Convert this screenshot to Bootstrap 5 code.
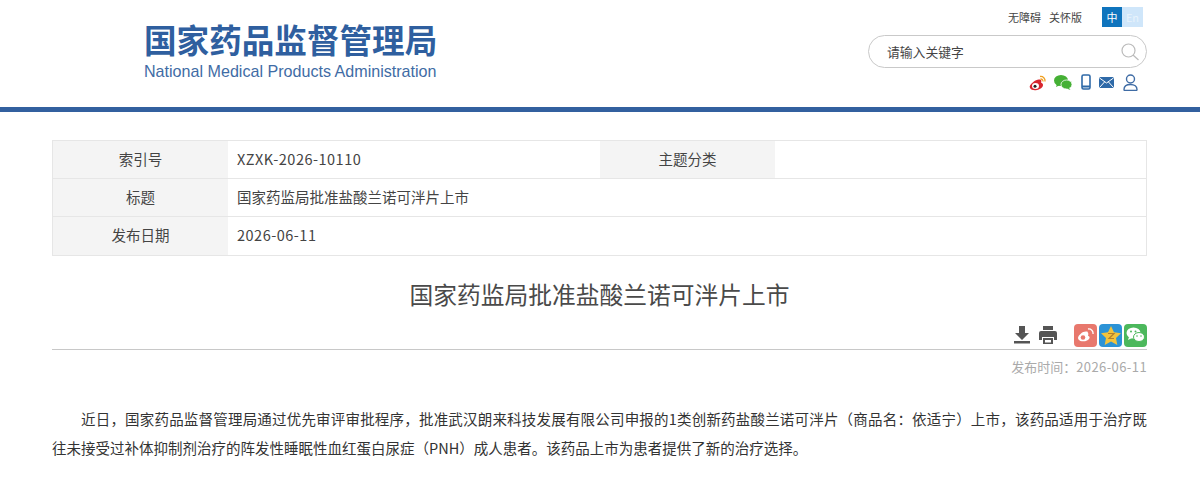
<!DOCTYPE html>
<html lang="zh"><head><meta charset="utf-8">
<link href="https://cdn.jsdelivr.net/npm/bootstrap@5.3.0/dist/css/bootstrap.min.css" rel="stylesheet">
<style>
html,body{height:484px;overflow:hidden}
body{font-family:"Noto Sans CJK SC","Noto Sans",sans-serif;color:#333;background:#fff;font-size:14px}
.hdr{height:112px;border-bottom:5px solid #32609f;padding:0 53px 0 144px}
.logo{padding-top:18px;color:#2f5f9f}
.logo-cn{font-size:32.6px;font-weight:700;line-height:42px;white-space:nowrap;width:293px}
.logo-en{font-family:"Liberation Sans",sans-serif;font-size:16.1px;font-weight:400;line-height:18px;margin-top:2px;white-space:nowrap;color:#3f6ca5}
.hright{width:279px;padding-top:7px}
.tools{font-size:11px;line-height:20px;color:#444;padding-right:4px}
.lang{display:flex;width:41px;height:20px;margin-left:20px;line-height:20px;text-align:center;font-size:11px}
.lang-a{width:20px;background:#0f74bd;color:#fff}
.lang-b{flex:1;background:#cfe6fa;color:#e8f3fc}
.srch{height:33px;margin-top:8px;border:1px solid #c9c9c9;border-radius:17px;padding:0 6px 0 18px;font-size:12.8px;color:#444}
.srch-ph{line-height:29px}
.socials{margin-top:4px;height:20px}
.ic-we{margin-left:7px}.ic-ph{margin-left:9px}.ic-ma{margin-left:8px}.ic-us{margin-left:9px;margin-right:9px}
.main-wrap{padding:0 53px 0 52px}
.meta{margin:28px 0 0;border:1px solid #e6e6e6;font-size:14.5px;color:#444}
.meta-row{height:38.2px;border-bottom:1px solid #e6e6e6;line-height:36px}
.meta-row:last-child{border-bottom:0;height:37.500px}
.mh{width:175px;background:#f4f4f4;text-align:center;flex:none}
.mv{flex:1;padding-left:9px}
.mv2{width:372px;flex:none;padding-left:9px}
.ltn{letter-spacing:.5px}
.art-title{font-size:23.750px;line-height:30px;color:#4a4a4a;text-align:center;margin:23px 0 0}
.tools2{height:27px;margin-top:13px}
.ic-pr{margin-left:9px}
.share{width:23px;height:23px;border-radius:4px;margin-left:2px;display:flex;align-items:center;justify-content:center}
.share-first{margin-left:17px}
.sh-w{background:#e8786d}.sh-q{background:#2c93d6}.sh-c{background:#4cb85c}
.rule{height:1px;background:#c8c8c8;margin-top:0}
.pubtime{font-size:13px;color:#aaa;text-align:right;line-height:20px;margin-top:7px}
.pubtime .ltn{letter-spacing:.4px}
.body-text{font-size:14.500px;line-height:29px;color:#333;margin-top:27px;text-indent:29px;text-align:justify}
</style></head><body>
<header class="hdr d-flex justify-content-between">
 <div class="logo">
  <div class="logo-cn">国家药品监督管理局</div>
  <div class="logo-en">National Medical Products Administration</div>
 </div>
 <div class="hright">
  <div class="d-flex justify-content-end tools"><span>无障碍</span><span class="ms-2">关怀版</span><span class="lang"><span class="lang-a">中</span><span class="lang-b">En</span></span></div>
  <div class="srch d-flex justify-content-between align-items-center"><span class="srch-ph">请输入关键字</span>
   <svg width="20" height="20" viewBox="0 0 20 20" fill="none" stroke="#bbb" stroke-width="1.2"><circle cx="8.5" cy="8.5" r="6.5"/><path d="M13 13l5.500 5"/></svg></div>
  <div class="socials d-flex justify-content-end align-items-center">
   <svg width="19" height="17" viewBox="0 0 19 17"><path d="M13 6c-2-1-5-.5-8 2.200C2.500 10.500 1 12 2 14c1 2 4 2.500 7 2 3-.5 6-2.500 6-5 0-1.500-1-2-2-2.500.5-1.500.5-2 0-2.500z" fill="#d8262e"/><ellipse cx="7.500" cy="12" rx="3.500" ry="3" fill="#fff"/><circle cx="7" cy="12.200" r="1.500" fill="#222"/><path d="M12 2.500c3-.5 5.500 2 5 5M12.500 5c1.500-.2 2.700 1 2.400 2.500" fill="none" stroke="#f0a020" stroke-width="1.300"/></svg>
   <svg class="ic-we" width="18" height="15" viewBox="0 0 18 15"><ellipse cx="7" cy="5.500" rx="7" ry="5.500" fill="#45b035"/><path d="M3 9l-1 3 4-2z" fill="#45b035"/><ellipse cx="12.500" cy="9.500" rx="5.500" ry="4.500" fill="#45b035" stroke="#fff" stroke-width=".8"/><path d="M15 13l1.500 2-4-1.500z" fill="#45b035"/></svg>
   <svg class="ic-ph" width="10" height="16" viewBox="0 0 10 16"><rect x="1" y="1" width="8" height="14" rx="1.500" fill="#fff" stroke="#2f6aa8" stroke-width="1.600"/><path d="M1 12.500h8" stroke="#2f6aa8" stroke-width="2"/></svg>
   <svg class="ic-ma" width="15" height="11" viewBox="0 0 15 11"><rect width="15" height="11" rx="1.500" fill="#2f6aa8"/><path d="M.5 1l7 5 7-5M.5 10.500L5.500 5M14.500 10.500L9.500 5" fill="none" stroke="#fff"/></svg>
   <svg class="ic-us" width="15" height="17" viewBox="0 0 15 17" fill="none" stroke="#3f6ca5" stroke-width="1.400"><circle cx="7.500" cy="5" r="4"/><path d="M1 15.500c0-3 2.500-5 6.500-5s6.500 2 6.500 5c0 .6-.4 1-1 1H2c-.6 0-1-.4-1-1z"/></svg>
  </div>
 </div>
</header>
<main class="main-wrap">
 <section class="meta">
  <div class="meta-row d-flex"><div class="mh">索引号</div><div class="mv2 ltn">XZXK-2026-10110</div><div class="mh">主题分类</div><div class="mv"></div></div>
  <div class="meta-row d-flex"><div class="mh">标题</div><div class="mv">国家药监局批准盐酸兰诺可泮片上市</div></div>
  <div class="meta-row d-flex"><div class="mh">发布日期</div><div class="mv ltn">2026-06-11</div></div>
 </section>
 <h1 class="art-title fw-normal">国家药监局批准盐酸兰诺可泮片上市</h1>
 <div class="tools2 d-flex justify-content-end align-items-center">
  <svg width="16" height="18" viewBox="0 0 16 18" fill="#555"><path d="M5 0h6v7h4l-7 7-7-7h4z"/><path d="M0 15h16v2.500H0z"/></svg>
  <svg class="ic-pr" width="18" height="18" viewBox="0 0 18 18" fill="#555"><path d="M4 0h10v4H4z"/><path d="M2 5h14a2 2 0 0 1 2 2v7h-3v-3H3v3H0V7a2 2 0 0 1 2-2z"/><path d="M4 12h10v6H4z"/><path d="M6 14h6v2.500H6z" fill="#fff"/></svg>
  <span class="share sh-w share-first"><svg width="17" height="14" viewBox="0 0 17 14"><path d="M11 4C9 3 6 3.500 3.500 6 1 8 .5 10 1.500 11.500 3 13.500 7 14 10 12.500c2-1 3-2.500 2.500-3.500-.3-.8-1-1-1.500-1.200.5-1.500.5-3-.5-3.800z" fill="#fff"/><circle cx="6" cy="9.500" r="2.300" fill="#e8786d"/><path d="M11 1c3-.5 5.500 2 5 5" fill="none" stroke="#fff" stroke-width="1.300"/></svg></span>
  <span class="share sh-q"><svg width="20" height="19" viewBox="0 0 20 19"><path d="M10 0l3 6.300 7 .9-5 4.800 1.300 7L10 15.500 3.700 19 5 12 0 7.200l7-.9z" fill="#f3c33c"/><path d="M7 7.500h6l-5 5h5" fill="none" stroke="#b5802a" stroke-width="1.200"/></svg></span>
  <span class="share sh-c"><svg width="19" height="16" viewBox="0 0 19 16"><ellipse cx="7.500" cy="6" rx="7" ry="5.500" fill="#fff"/><path d="M3 10l-1 3 4-2z" fill="#fff"/><ellipse cx="13" cy="10" rx="5.500" ry="4.500" fill="#fff" stroke="#4cb85c"/><circle cx="5" cy="4.500" r="1" fill="#4cb85c"/><circle cx="9.500" cy="4.500" r="1" fill="#4cb85c"/><circle cx="11" cy="9" r=".8" fill="#4cb85c"/><circle cx="15" cy="9" r=".8" fill="#4cb85c"/></svg></span>
 </div>
 <div class="rule"></div>
 <div class="pubtime">发布时间：<span class="ltn">2026-06-11</span></div>
 <p class="body-text">近日，国家药品监督管理局通过优先审评审批程序，批准武汉朗来科技发展有限公司申报的1类创新药盐酸兰诺可泮片（商品名：依适宁）上市，该药品适用于治疗既往未接受过补体抑制剂治疗的阵发性睡眠性血红蛋白尿症（PNH）成人患者。该药品上市为患者提供了新的治疗选择。</p>
</main>
<script src="https://cdn.jsdelivr.net/npm/bootstrap@5.3.0/dist/js/bootstrap.bundle.min.js"></script>
</body></html>
